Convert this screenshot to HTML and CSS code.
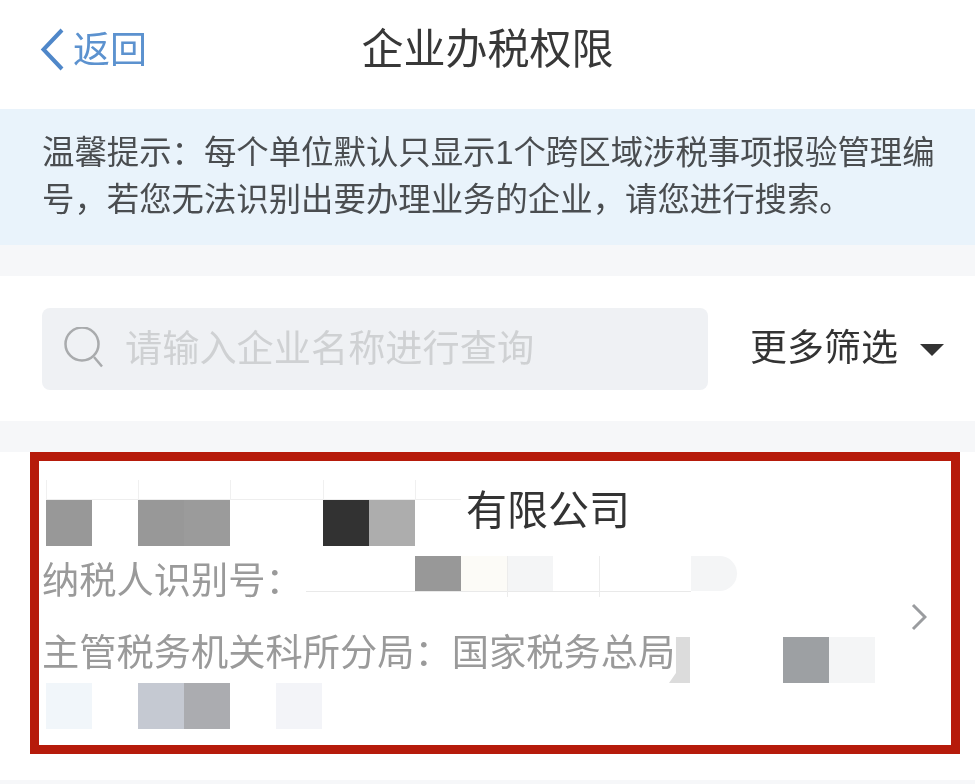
FILE: index.html
```html
<!DOCTYPE html>
<html lang="zh-CN">
<head>
<meta charset="utf-8">
<title>企业办税权限</title>
<link rel="stylesheet" href="styles.css">
</head>
<body>
<div class="page">
  <header class="nav">
    <a class="back">
      <svg class="back-icon" width="26" height="44" viewBox="0 0 26 44"><path d="M22 2 3.500 21.500 22 41" fill="none" stroke="#4f87c9" stroke-width="4"/></svg>
      <span>返回</span>
    </a>
    <h1 class="title">企业办税权限</h1>
    <span></span>
  </header>

  <section class="notice">温馨提示：每个单位默认只显示1个跨区域涉税事项报验管理编号，若您无法识别出要办理业务的企业，请您进行搜索。</section>

  <section class="search-bar">
    <div class="search-box">
      <svg class="search-icon" width="42" height="44" viewBox="0 0 42 44"><circle cx="18" cy="17" r="16.500" fill="none" stroke="#a9abad" stroke-width="2.500"/><path d="M30 30 38 39.500" stroke="#a9abad" stroke-width="2.500" fill="none"/></svg>
      <span class="placeholder">请输入企业名称进行查询</span>
    </div>
    <div class="filter">
      <span class="filter-text">更多筛选</span>
      <i class="caret"></i>
    </div>
  </section>

  <section class="card">
    <div class="highlight">
      <div class="info">
        <div class="row-name">
          <div class="mask-strip strip-name">
            <i class="cell c-gray tick"></i><i class="cell"></i><i class="cell c-gray tick"></i><i class="cell c-gray2"></i><i class="cell tick"></i><i class="cell-wide"></i><i class="cell c-dark tick"></i><i class="cell c-mid"></i><i class="cell tick"></i>
          </div>
          <span class="company">有限公司</span>
        </div>
        <div class="row-id">
          <span class="label">纳税人识别号：</span>
          <div class="mask-strip strip-id">
            <i class="cell-short"></i><i class="cell c-gray"></i><i class="cell c-cream"></i><i class="cell c-pale stem"></i><i class="cell"></i><i class="cell stem"></i><i class="cell"></i><i class="cell c-pale c-round"></i>
          </div>
        </div>
        <div class="row-office">
          <span class="label">主管税务机关科所分局：国家税务总局</span>
          <i class="sliver"></i>
          <i class="gap-93"></i>
          <i class="cell c-slate"></i><i class="cell c-pale"></i>
        </div>
        <div class="row-last">
          <i class="cell c-ice"></i><i class="cell"></i><i class="cell c-blue"></i><i class="cell c-ash"></i><i class="cell"></i><i class="cell c-lilac"></i>
        </div>
      </div>
      <svg class="chevron" width="16" height="28" viewBox="0 0 16 28"><path d="M2 2 14 14 2 26" fill="none" stroke="#9a9c9f" stroke-width="3"/></svg>
    </div>
  </section>
</div>
</body>
</html>
```
FILE: styles.css
```css
* { box-sizing: border-box; }
html, body { margin: 0; height: 784px; overflow: hidden; background: #f6f7f9; }
body { font-family: "Liberation Sans", "Noto Sans CJK SC", sans-serif; }
.page { width: 975px; height: 784px; filter: blur(0.45px); }

.nav {
  height: 109px;
  background: #fff;
  display: grid;
  grid-template-columns: 1fr auto 1fr;
  align-items: center;
  padding: 0 40px 16px;
}
.back { display: flex; align-items: center; color: #5c92cf; font-size: 37px; gap: 7px; }
.back-icon { width: 26px; height: 44px; margin-top: 6px; }
.title { margin: 0 0 2px; font-size: 42px; font-weight: 400; color: #383838; }

.notice {
  height: 136px;
  padding: 21px 30px 0 42px;
  background: #e9f3fb;
  color: #4a4d50;
  font-size: 32.400px;
  line-height: 47px;
}

.search-bar {
  margin-top: 31px;
  height: 145px;
  background: #fff;
  padding: 32px 30px 31px 42px;
  display: flex;
  align-items: center;
}
.search-box {
  width: 666px;
  height: 82px;
  border-radius: 8px;
  background: #eff1f4;
  display: flex;
  align-items: center;
  padding-left: 22px;
}
.search-icon { margin-right: 19px; }
.placeholder { font-size: 37.200px; color: #cfd1d3; margin-top: -6px; }
.filter { display: flex; align-items: center; margin-left: 42px; color: #333; font-size: 37px; }
.filter-text { margin-bottom: 8px; }
.caret {
  width: 0; height: 0;
  margin-left: 22px; margin-top: 2px;
  border-left: 12.500px solid transparent;
  border-right: 12.500px solid transparent;
  border-top: 12px solid #333;
}

.card {
  margin-top: 31px;
  height: 328px;
  background: #fff;
  padding: 0 15px 26px 30px;
}
.highlight {
  height: 302px;
  border: 9px solid #b61b0b;
  display: flex;
  background: #fff;
}
.info { flex: 1; padding: 27px 0 0 3px; }
.chevron { align-self: center; margin: 28px 24px 0 0; }

.cell, .cell-wide, .cell-short, .gap-93, .sliver { display: block; flex: none; }
.cell { width: 46px; height: 46px; }
.cell-wide { width: 47px; }
.row-name { display: flex; height: 58px; align-items: flex-end; margin-left: 4px; }
.strip-name { display: flex; align-items: flex-end; height: 47px; border-top: 1px solid #eeeeee; }
.tick { position: relative; }
.tick::before { content: ""; position: absolute; left: 0; bottom: 100%; width: 1px; height: 20px; background: #f0f0f0; }
.company { font-size: 41px; line-height: 46px; color: #333; align-self: flex-start; margin: 0 0 0 5px; }

.row-id { display: flex; height: 46px; margin-top: 10px; color: #999; }
.label { font-size: 37.250px; line-height: 46px; padding-top: 2px; color: #9a9a9a; white-space: nowrap; }
.strip-id { display: flex; height: 36px; margin-left: 3px; align-items: flex-start; }
.strip-id .cell, .strip-id .cell-short { height: 36px; border-bottom: 1px solid #e9e9e9; }
.strip-id .c-round { height: 35px; border-bottom: 0; border-radius: 0 18px 18px 0; }
.stem { position: relative; }
.stem::before { content: ""; position: absolute; left: 0; top: 0; width: 1px; height: 41px; background: #ececec; }
.cell-short { width: 109px; }

.row-office { display: flex; height: 55px; margin-top: 26px; align-items: flex-end; }
.row-office .label { align-self: flex-start; }
.sliver {
  width: 21px; height: 46px; margin-left: -6.250px;
  background: #dcdcdc;
  clip-path: polygon(33% 0, 100% 0, 100% 100%, 0 100%, 33% 78%);
}
.gap-93 { width: 93px; }

.row-last { display: flex; margin-left: 4px; }

.c-gray { background: #989898; }
.c-gray2 { background: #9b9b9b; }
.c-dark { background: #323232; }
.c-mid { background: #adadad; }
.c-cream { background: #fcfbf7; }
.c-pale { background: #f4f5f6; }
.c-slate { background: #9da0a3; }
.c-ice { background: #f1f6fa; }
.c-blue { background: #c5c9d2; }
.c-ash { background: #abacb0; }
.c-lilac { background: #f3f4f8; }
```
